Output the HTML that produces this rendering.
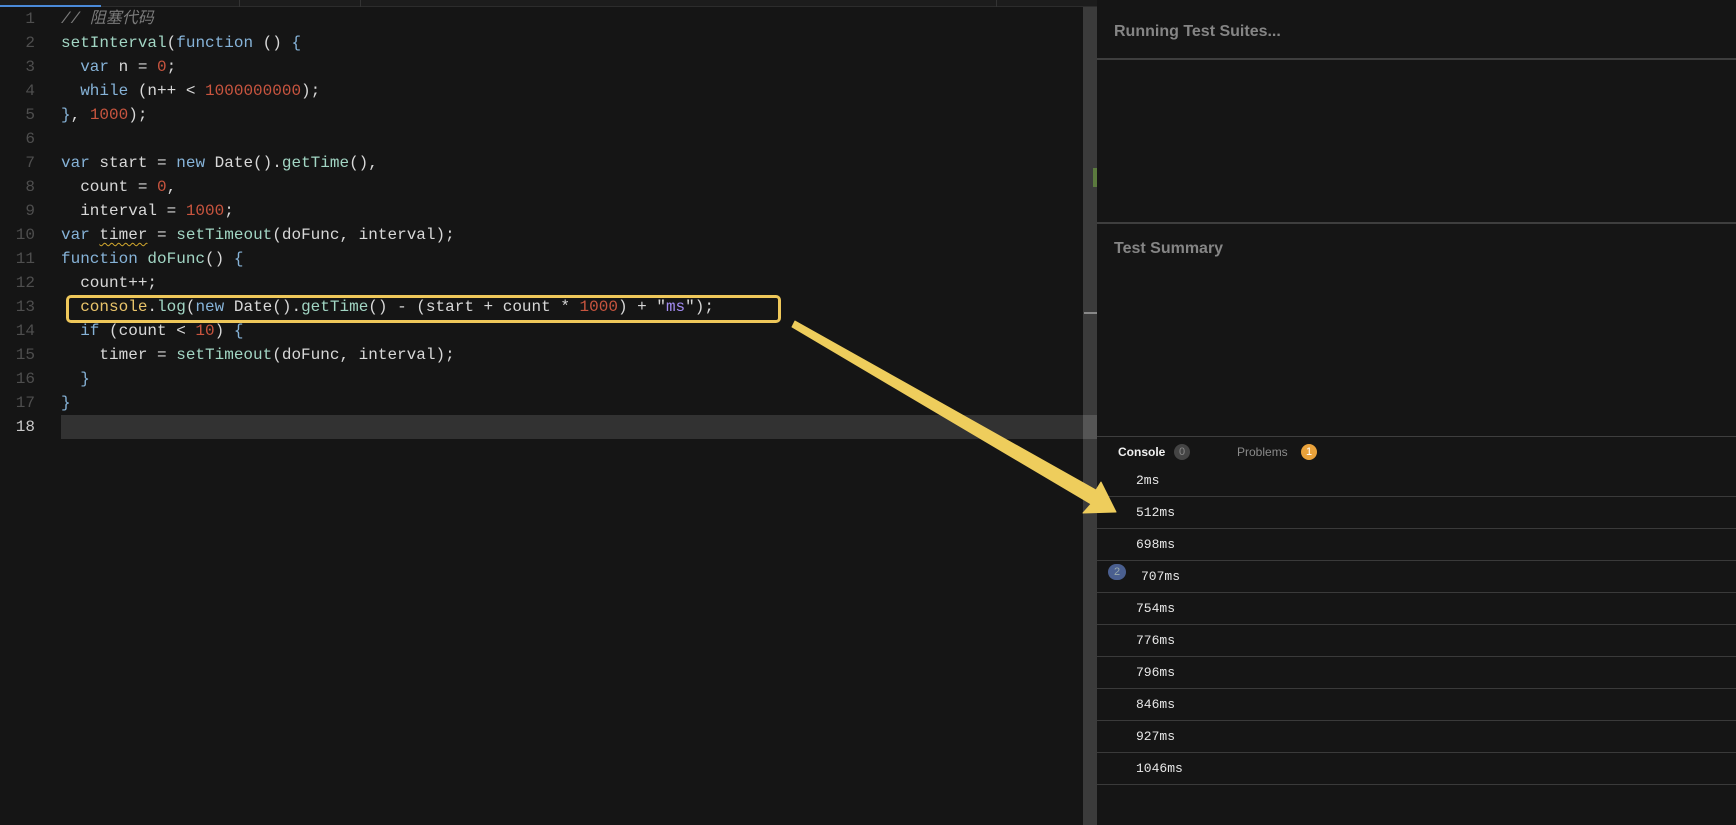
<!DOCTYPE html>
<html><head><meta charset="utf-8"><style>
*{margin:0;padding:0;box-sizing:border-box}
body{width:1736px;height:825px;background:#151515;position:relative;overflow:hidden;font-family:"Liberation Sans","Noto Sans CJK SC",sans-serif}
.code{position:absolute;left:0;top:7px;font-family:"Liberation Mono","Noto Sans CJK SC",monospace;font-size:16px;color:#d8d8d8}
.ln{position:absolute;left:0;width:35px;text-align:right;color:#4e4e4e;height:24px;line-height:24px}
.l{position:absolute;left:61px;height:24px;line-height:24px;white-space:pre}
.k{color:#86b3d8}.f{color:#a2d6c4}.n{color:#c9553f}.s{color:#a38cf2}.c{color:#7a7a7a;font-style:italic}.y{color:#e9c46a}
.sq{text-decoration:underline wavy #d2a82d;text-decoration-thickness:1px;text-underline-offset:3px}
.hl{position:absolute;left:61px;top:415px;width:1022px;height:24px;background:#323232}
.box{position:absolute;left:66px;top:295px;width:715px;height:28px;border:3px solid #eec75a;border-radius:5px}
.sb{position:absolute;left:1083px;top:7px;width:14px;height:818px;background:#3b3b3b}
.tabs{position:absolute;left:0;top:0;width:1097px;height:7px;background:#1c1c1c;border-bottom:1px solid #2c2c2c}
.rp{position:absolute;left:1097px;top:0;right:0;bottom:0;background:#151515}
.h{position:absolute;color:#858585;font-size:16px;font-weight:bold}
.hr{position:absolute;left:0;right:0;height:2px;background:#3e3e3e}
.row{position:absolute;left:0;right:0;height:32px;border-bottom:1px solid #3a3a3a;font-family:"Liberation Mono",monospace;font-size:13px;color:#e8e8e8;line-height:32px;padding-left:39px}
</style></head><body>
<div class="tabs"><div style="position:absolute;left:0;top:5px;width:101px;height:2px;background:#4a8ad8"></div><div style="position:absolute;left:239px;top:0;width:1px;height:7px;background:#333"></div><div style="position:absolute;left:360px;top:0;width:1px;height:7px;background:#333"></div><div style="position:absolute;left:996px;top:0;width:1px;height:7px;background:#333"></div></div>
<div class="hl"></div>
<div class="code">
<div class="ln" style="top:0">1</div><div class="l c" style="top:0">// 阻塞代码</div>
<div class="ln" style="top:24px">2</div><div class="l" style="top:24px"><span class="f">setInterval</span>(<span class="k">function</span> () <span class="k">{</span></div>
<div class="ln" style="top:48px">3</div><div class="l" style="top:48px">  <span class="k">var</span> n = <span class="n">0</span>;</div>
<div class="ln" style="top:72px">4</div><div class="l" style="top:72px">  <span class="k">while</span> (n++ &lt; <span class="n">1000000000</span>);</div>
<div class="ln" style="top:96px">5</div><div class="l" style="top:96px"><span class="k">}</span>, <span class="n">1000</span>);</div>
<div class="ln" style="top:120px">6</div>
<div class="ln" style="top:144px">7</div><div class="l" style="top:144px"><span class="k">var</span> start = <span class="k">new</span> Date().<span class="f">getTime</span>(),</div>
<div class="ln" style="top:168px">8</div><div class="l" style="top:168px">  count = <span class="n">0</span>,</div>
<div class="ln" style="top:192px">9</div><div class="l" style="top:192px">  interval = <span class="n">1000</span>;</div>
<div class="ln" style="top:216px">10</div><div class="l" style="top:216px"><span class="k">var</span> <span class="sq">timer</span> = <span class="f">setTimeout</span>(doFunc, interval);</div>
<div class="ln" style="top:240px">11</div><div class="l" style="top:240px"><span class="k">function</span> <span class="f">doFunc</span>() <span class="k">{</span></div>
<div class="ln" style="top:264px">12</div><div class="l" style="top:264px">  count++;</div>
<div class="ln" style="top:288px">13</div><div class="l" style="top:288px">  <span class="y">console</span>.<span class="f">log</span>(<span class="k">new</span> Date().<span class="f">getTime</span>() - (start + count * <span class="n">1000</span>) + "<span class="s">ms</span>");</div>
<div class="ln" style="top:312px">14</div><div class="l" style="top:312px">  <span class="k">if</span> (count &lt; <span class="n">10</span>) <span class="k">{</span></div>
<div class="ln" style="top:336px">15</div><div class="l" style="top:336px">    timer = <span class="f">setTimeout</span>(doFunc, interval);</div>
<div class="ln" style="top:360px">16</div><div class="l" style="top:360px">  <span class="k">}</span></div>
<div class="ln" style="top:384px">17</div><div class="l" style="top:384px"><span class="k">}</span></div>
<div class="ln" style="top:408px;color:#c8c8c8">18</div>
</div>
<div class="box"></div>
<div class="sb"><div style="position:absolute;left:10px;top:161px;width:4px;height:19px;background:#5b7a3e"></div><div style="position:absolute;left:1px;top:305px;width:13px;height:2px;background:#888"></div><div style="position:absolute;left:0;top:408px;width:14px;height:24px;background:#555"></div></div>
<div class="rp">
<div class="h" style="left:17px;top:23px">Running Test Suites...</div>
<div class="hr" style="top:58px"></div>
<div class="hr" style="top:222px"></div>
<div class="h" style="left:17px;top:240px">Test Summary</div>
<div class="hr" style="top:436px;height:1px"></div>
<div style="position:absolute;left:21px;top:445px;font-size:12px;color:#f0f0f0;font-weight:bold">Console</div>
<div style="position:absolute;left:77px;top:444px;width:16px;height:16px;border-radius:8px;background:#444;color:#888;font-size:11px;text-align:center;line-height:16px">0</div>
<div style="position:absolute;left:140px;top:445px;font-size:12px;color:#8a8a8a">Problems</div>
<div style="position:absolute;left:204px;top:444px;width:16px;height:16px;border-radius:8px;background:#e9a23b;color:#fff;font-size:11px;text-align:center;line-height:16px">1</div>
<div class="row" style="top:465px">2ms</div>
<div class="row" style="top:497px">512ms</div>
<div class="row" style="top:529px">698ms</div>
<div class="row" style="top:561px;padding-left:44px">707ms<div style="position:absolute;left:11px;top:3px;width:18px;height:16px;border-radius:8px;background:#4a5f8f;color:#9aa;font-size:11px;text-align:center;line-height:16px;font-family:'Liberation Sans',sans-serif">2</div></div>
<div class="row" style="top:593px">754ms</div>
<div class="row" style="top:625px">776ms</div>
<div class="row" style="top:657px">796ms</div>
<div class="row" style="top:689px">846ms</div>
<div class="row" style="top:721px">927ms</div>
<div class="row" style="top:753px">1046ms</div>
</div>
<svg style="position:absolute;left:0;top:0" width="1736" height="825"><polygon points="792,327 795,321 1096,490 1101,482 1116,512 1083,513 1091,504" fill="#eecd5c" stroke="#eecd5c" stroke-width="1" stroke-linejoin="round"/></svg>
</body></html>
